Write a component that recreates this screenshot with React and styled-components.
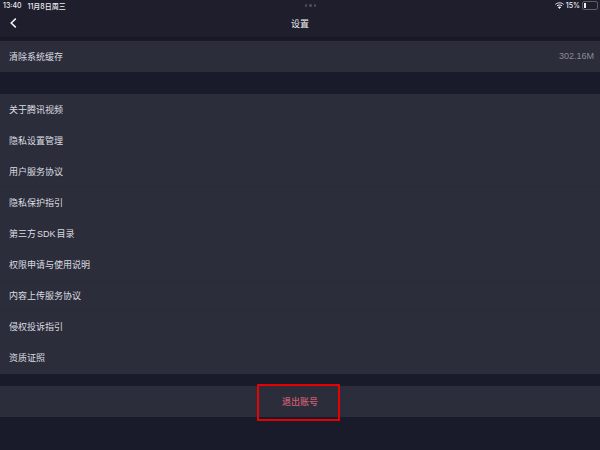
import React from 'react'
import styled, { createGlobalStyle } from 'styled-components'

const GlobalStyle = createGlobalStyle`
    html, body {
        margin: 0;
        padding: 0;
        background: #1a1b2a;
    }
`

const Page = styled.div`
    width: 600px;
    height: 450px;
    overflow: hidden;
    background: #1a1b2a;
    font-family: "Liberation Sans", "Noto Sans CJK SC", sans-serif;
    color: #dcdde1;
`

const Header = styled.div`
    height: 37px;
    background: #1e1e2c;
    box-shadow: 0 3px 3px #181926;
`

const StatusBar = styled.div`
    display: flex;
    align-items: center;
    justify-content: space-between;
    height: 11px;
    padding: 0 2px 0 3px;
    font-family: Inter, "Noto Sans CJK SC", sans-serif;
    font-size: 7px;
    font-weight: 500;
    color: #ececf0;
`

const StatusGroup = styled.div`
    display: flex;
    align-items: center;
    gap: ${p => p.$gap || 2}px;
`

const Dots = styled.div`
    display: flex;
    gap: 2px;
`

const Dot = styled.span`
    width: 2.5px;
    height: 2.5px;
    border-radius: 50%;
    background: #4c4d5a;
`

const Battery = styled.div`
    display: flex;
    width: 12px;
    height: 5px;
    padding: 1px;
    border: 1px solid #5d5e69;
    border-radius: 2px;
`

const BatteryLevel = styled.div`
    width: 2px;
    background: #f0f0f0;
`

const NavBar = styled.div`
    display: flex;
    align-items: center;
    justify-content: center;
    position: relative;
    height: 24px;
    font-size: 9px;
    color: #f0f0f2;
`

const BackIcon = styled.svg`
    position: absolute;
    left: 10px;
    top: 7px;
`

const Section = styled.div`
    margin-top: ${p => p.$top}px;
    background: #2b2d3a;
`

const Row = styled.div`
    display: flex;
    align-items: center;
    justify-content: space-between;
    height: 31.1px;
    padding: 0 6px 0 9px;
    box-sizing: border-box;
    font-size: 9px;
    word-spacing: -1.5px;
    border-bottom: 1px solid ${p => (p.$last ? '#2b2d3a' : '#292b37')};
`

const Value = styled.span`
    color: #8a8b95;
    font-size: 9px;
    word-spacing: 0;
`

const LogoutRow = styled.div`
    display: flex;
    align-items: center;
    justify-content: center;
    position: relative;
    height: 31px;
    font-family: "Noto Sans CJK SC", sans-serif;
    font-size: 9px;
    font-weight: 500;
    color: #cc5f73;
    background: #2b2d3a;
`

const Highlight = styled.div`
    position: absolute;
    left: 257px;
    top: -2px;
    width: 83px;
    height: 37px;
    box-sizing: border-box;
    border: 2px solid #e60000;
`

const items = [
    '关于腾讯视频',
    '隐私设置管理',
    '用户服务协议',
    '隐私保护指引',
    '第三方 SDK 目录',
    '权限申请与使用说明',
    '内容上传服务协议',
    '侵权投诉指引',
    '资质证照'
]

const App = () => (
    <Page>
        <GlobalStyle />
        <Header>
            <StatusBar>
                <StatusGroup $gap={6}>
                    <span>13:40</span>
                    <span>11月8日周三</span>
                </StatusGroup>
                <Dots>
                    <Dot />
                    <Dot />
                    <Dot />
                </Dots>
                <StatusGroup>
                    <svg width="9" height="7" viewBox="0 0 9 7" fill="none" stroke="#f4f4f4" strokeWidth="1">
                        <path d="M0.4 2.4 C2.6 0.3 6.4 0.3 8.6 2.4" />
                        <path d="M1.9 3.9 C3.3 2.7 5.7 2.7 7.1 3.9" />
                        <path d="M3.4 5.3 C4 4.8 5 4.8 5.6 5.3 L4.5 6.4 Z" fill="#f4f4f4" />
                    </svg>
                    <span>15%</span>
                    <Battery>
                        <BatteryLevel />
                    </Battery>
                </StatusGroup>
            </StatusBar>
            <NavBar>
                <BackIcon width="7" height="10" viewBox="0 0 7 10">
                    <path d="M5.8 0.6 L1.2 5 L5.8 9.4" fill="none" stroke="#f4f4f4" strokeWidth="1.5" />
                </BackIcon>
                设置
            </NavBar>
        </Header>
        <Section $top={4}>
            <Row $last>
                <span>清除系统缓存</span>
                <Value>302.16M</Value>
            </Row>
        </Section>
        <Section $top={22}>
            {items.map((item, i) => (
                <Row key={item} $last={i === items.length - 1}>
                    {item}
                </Row>
            ))}
        </Section>
        <Section $top={12}>
            <LogoutRow>
                退出账号
                <Highlight />
            </LogoutRow>
        </Section>
    </Page>
)

export default App
